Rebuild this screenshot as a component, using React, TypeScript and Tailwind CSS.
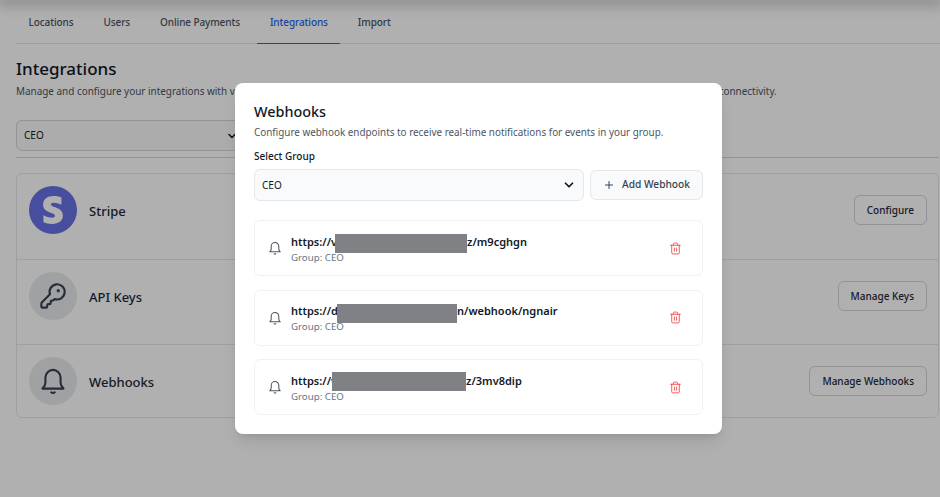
import { ChevronDown, KeyRound, Plus, Trash2 } from 'lucide-react'
import { FaStripeS } from 'react-icons/fa'

const tabs = ['Locations', 'Users', 'Online Payments', 'Integrations', 'Import']

function BellIcon({ className }: { className: string }) {
	return (
		<svg
			viewBox="0 0 24 24"
			fill="none"
			stroke="currentColor"
			strokeWidth="1.8"
			strokeLinecap="round"
			strokeLinejoin="round"
			className={className}
		>
			<path d="M12 2.5a6.5 6.5 0 0 0-6.5 6.5v4.5c0 2-.9 3.6-2.5 5h18c-1.600-1.400-2.500-3-2.500-5V9A6.500 6.500 0 0 0 12 2.500Z" />
			<path d="M10.500 21.800c.8.500 2.200.500 3 0" />
		</svg>
	)
}

const integrations = [
	{
		name: 'Stripe',
		action: 'Configure',
		circle: 'bg-[#6772e5] text-white',
		rowClass: 'border-b border-[#e5e7eb] pb-[25px]',
		icon: <FaStripeS className="h-7 w-7" />
	},
	{
		name: 'API Keys',
		action: 'Manage Keys',
		circle: 'bg-[#e7eaed] text-[#374151]',
		rowClass: 'border-b border-[#e5e7eb] pb-6',
		icon: <KeyRound className="h-7 w-7" strokeWidth={1.8} />
	},
	{
		name: 'Webhooks',
		action: 'Manage Webhooks',
		circle: 'bg-[#e7eaed] text-[#374151]',
		rowClass: 'pb-3',
		icon: <BellIcon className="h-7 w-7" />
	}
]

const webhooks = [
	{ start: 'https://v', end: 'z/m9cghgn', bar: 'w-[132px] top-[1.5px]', gap: 'ml-[-2px]' },
	{ start: 'https://d', end: 'n/webhook/ngnair', bar: 'w-[120px] top-[1.5px]', gap: 'ml-[-1px]' },
	{ start: 'https://v', end: 'z/3mv8dip', bar: 'w-[134px] top-[0px]', gap: 'ml-[-5px]' }
]

export default function App() {
	return (
		<div className="relative h-[497px] w-[940px] overflow-hidden bg-white font-['Noto_Sans',sans-serif] text-[#111827]">
			<div className="h-0 shadow-[0_0_14px_4px_rgba(0,0,0,0.3)]" />

			<div className="ml-4 flex h-[44px] border-b border-[#e5e7eb]">
				<div className="flex gap-[5px]">
					{tabs.map((tab) => (
						<div
							key={tab}
							className={`flex h-[44px] items-center px-[12.5px] pt-[1px] text-[10px] font-medium tracking-[-0.1px] ${
								tab === 'Integrations'
									? 'border-b border-[#2563eb] text-[#2563eb]'
									: 'border-b border-transparent text-[#4b5563]'
							}`}
						>
							{tab}
						</div>
					))}
				</div>
			</div>

			<div className="pr-px pl-4">
				<h1 className="mt-[14px] text-[17px] leading-[22px] font-medium">Integrations</h1>
				<p className="mt-[3px] text-[9.93px] leading-[16px] whitespace-nowrap text-[#4b5563]">
					Manage and configure your integrations with various services and APIs to improve your group's workflows, automation, reporting, security and overall connectivity.
				</p>

				<div className="mt-[21px] flex h-[31px] w-[231px] items-center justify-between rounded-md border border-[#d1d5db] bg-[#f9fafb] pr-2 pl-[7px] text-[10px]">
					<span>CEO</span>
					<ChevronDown className="h-3 w-3" strokeWidth={3} />
				</div>

				<div className="mt-[6px] border-t border-[#d1d5db]" />

				<div className="mt-[15px] rounded-md border border-[#e5e7eb]">
					{integrations.map((row) => (
						<div
							key={row.name}
							className={`flex items-start justify-between pt-3 pr-[11px] pl-3 ${row.rowClass}`}
						>
							<div className="flex h-12 items-center gap-3">
								<div
									className={`flex h-12 w-12 items-center justify-center rounded-full ${row.circle}`}
								>
									{row.icon}
								</div>
								<span className="pt-[4px] text-[13px] font-medium text-[#1f2937]">{row.name}</span>
							</div>
							<div className="flex h-12 items-center">
								<button
									type="button"
									className="h-[30px] rounded-md border border-[#d1d5db] px-3 text-[10px] font-medium text-[#1f2937]"
								>
									{row.action}
								</button>
							</div>
						</div>
					))}
				</div>
			</div>

			{/* dialog */}
			<div className="absolute inset-0 bg-black/[0.31]">
				<div className="absolute top-[83px] left-[235px] w-[487px] rounded-lg bg-white px-[19px] pt-[19px] pb-[19px] shadow-lg">
					<h2 className="text-[14.4px] leading-5 font-medium">Webhooks</h2>
					<p className="mt-[2px] text-[9.9px] leading-4 text-[#4b5563]">
						Configure webhook endpoints to receive real-time notifications for events in your group.
					</p>
					<div className="mt-[8px] text-[10px] leading-4 font-medium">Select Group</div>

					<div className="mt-[5px] flex items-center gap-[6px]">
						<div className="flex h-[32px] w-[330px] items-center justify-between rounded-md border border-[#e5e7eb] bg-[#f9fafb] pr-[7px] pl-[7px] text-[10px]">
							<span>CEO</span>
							<ChevronDown className="h-[14px] w-[14px]" strokeWidth={3} />
						</div>
						<button
							type="button"
							className="flex h-[30px] w-[113px] items-center justify-center gap-[7px] rounded-md border border-[#e5e7eb] bg-[#f9fafb] text-[10.2px] font-medium text-[#374151]"
						>
							<Plus className="h-3 w-3" />
							Add Webhook
						</button>
					</div>

					<div className="mt-[19px] flex flex-col gap-[13.5px]">
						{webhooks.map((hook) => (
							<div
								key={hook.end}
								className="flex h-[56px] items-center justify-between rounded-md border border-[#f0f1f3] pr-[20px] pl-[13px]"
							>
								<div className="flex items-center gap-[9px]">
									<BellIcon className="h-[14px] w-[14px] text-[#4b5563]" />
									<div className="mt-[2px]">
										<div className="flex h-[15px] items-center text-[11px] font-semibold whitespace-nowrap">
											{hook.start}
											<span
												className={`relative z-10 h-[19px] bg-[#808184] ${hook.bar} ${hook.gap}`}
											/>
											{hook.end}
										</div>
										<div className="mt-[1px] text-[9.7px] leading-[13px] text-[#64748b]">Group: CEO</div>
									</div>
								</div>
								<Trash2 className="h-[13px] w-[13px] text-[#ef4444]" strokeWidth={1.6} />
							</div>
						))}
					</div>
				</div>
			</div>
		</div>
	)
}
